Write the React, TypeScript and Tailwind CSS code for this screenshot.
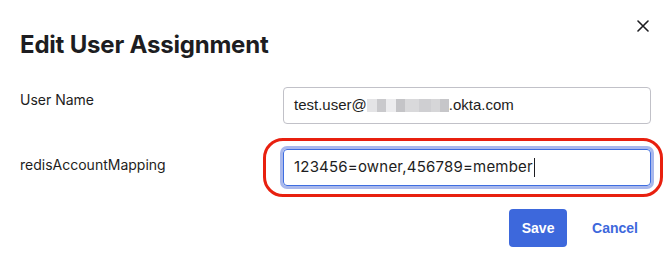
import React from 'react';

const App: React.FC = () => {
  return (
    <div className="w-[672px] h-[269px] bg-white relative overflow-hidden text-[#1d1d21]" style={{ fontFamily: 'Inter, "Noto Sans", sans-serif' }}>
      {/* close */}
      <button className="absolute left-[637px] top-[20px] w-[12px] h-[12px] flex items-center justify-center">
        <svg width="12" height="12" viewBox="0 0 12 12" fill="none" stroke="#1d1d21" strokeWidth="1.6" strokeLinecap="round">
          <path d="M1 1L11 11M11 1L1 11" />
        </svg>
      </button>

      <div className="pl-[20px] pr-[21px] pt-[30px]">
        <h1 className="text-[24px] leading-[30px] font-bold tracking-[-0.2px]">Edit User Assignment</h1>

        <div className="mt-[27px] flex items-start">
          <label className="w-[263px] pt-[3px] text-[14px] leading-[20px]">User Name</label>
          <div className="w-[368px] h-[37px] border border-[#c1c1c8] rounded-[4px] flex items-center pl-[10px] text-[15px]" style={{ fontFamily: '"Liberation Sans", Arial, sans-serif' }}>
            <span>test.user@</span>
            <span className="inline-flex h-[13px]">
              <span className="w-[10px] bg-[#e4e4e6]" />
              <span className="w-[9px] bg-[#c9c9cc]" />
              <span className="w-[10px] bg-[#ececee]" />
              <span className="w-[9px] bg-[#c4c4c7]" />
              <span className="w-[14px] bg-[#d9d9db]" />
              <span className="w-[12px] bg-[#cfcfd2]" />
              <span className="w-[9px] bg-[#d6d6d8]" />
              <span className="w-[9px] bg-[#c6c6c9]" />
            </span>
            <span>.okta.com</span>
          </div>
        </div>

        <div className="mt-[25px] flex items-start">
          <label className="w-[263px] pt-[6px] text-[14px] leading-[20px]">redisAccountMapping</label>
          <div className="relative">
            <div className="w-[368px] h-[37px] border border-[#3f6ee0] rounded-[4px] flex items-center pl-[10px] text-[15px] tracking-[0.2px] shadow-[0_0_0_3px_#a9b8ec]">
              <span>123456=owner,456789=member</span>
              <span className="w-px h-[19px] bg-[#1d1d21] ml-[1px]" />
            </div>
            {/* annotation */}
            <div className="absolute left-[-20px] right-[-12px] top-[-11px] bottom-[-11px] border-[3px] border-[#e8200f] rounded-[20px] pointer-events-none" />
          </div>
        </div>

        <div className="mt-[23px] flex justify-end items-center pr-[13px]">
          <button className="w-[58px] h-[38px] rounded-[4px] bg-[#3d68dc] text-white text-[14px] font-bold" style={{ fontFamily: '"Liberation Sans", Arial, sans-serif' }}>Save</button>
          <button className="ml-[25px] text-[#3d68dc] text-[14px] font-bold" style={{ fontFamily: '"Liberation Sans", Arial, sans-serif' }}>Cancel</button>
        </div>
      </div>
    </div>
  );
};

export default App;
